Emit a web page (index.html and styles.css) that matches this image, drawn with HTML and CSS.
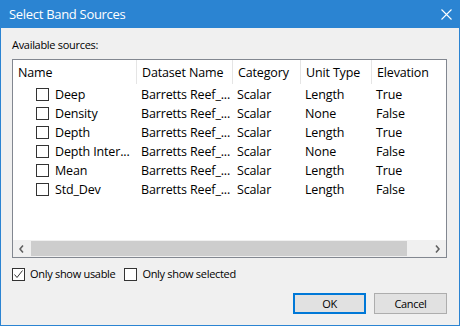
FILE: index.html
```html
<!DOCTYPE html>
<html lang="en">
<head>
    <meta charset="UTF-8">
    <title>Select Band Sources</title>
    <link rel="stylesheet" href="styles.css">
</head>
<body>
    <div class="window">
        <div class="titlebar">
            <span class="title">Select Band Sources</span>
            <svg class="close" width="11" height="11" viewBox="0 0 11 11">
                <path d="M0.5 0.5 L10.5 10.5 M10.5 0.5 L0.5 10.5" stroke="#fff" stroke-width="1.1" fill="none"/>
            </svg>
        </div>

        <div class="content">
            <div class="label">Available sources:</div>

            <div class="listview">
                <div class="list-header">
                    <div class="col col-name">Name</div>
                    <div class="col col-dataset">Dataset Name</div>
                    <div class="col col-cat">Category</div>
                    <div class="col col-unit">Unit Type</div>
                    <div class="col col-elev">Elevation</div>
                </div>
                <div class="list-body">
                    <div class="row">
                        <div class="col col-name"><span class="check"></span>Deep</div>
                        <div class="col col-dataset">Barretts Reef_...</div>
                        <div class="col col-cat">Scalar</div>
                        <div class="col col-unit">Length</div>
                        <div class="col col-elev">True</div>
                    </div>
                    <div class="row">
                        <div class="col col-name"><span class="check"></span>Density</div>
                        <div class="col col-dataset">Barretts Reef_...</div>
                        <div class="col col-cat">Scalar</div>
                        <div class="col col-unit">None</div>
                        <div class="col col-elev">False</div>
                    </div>
                    <div class="row">
                        <div class="col col-name"><span class="check"></span>Depth</div>
                        <div class="col col-dataset">Barretts Reef_...</div>
                        <div class="col col-cat">Scalar</div>
                        <div class="col col-unit">Length</div>
                        <div class="col col-elev">True</div>
                    </div>
                    <div class="row">
                        <div class="col col-name"><span class="check"></span>Depth Inter...</div>
                        <div class="col col-dataset">Barretts Reef_...</div>
                        <div class="col col-cat">Scalar</div>
                        <div class="col col-unit">None</div>
                        <div class="col col-elev">False</div>
                    </div>
                    <div class="row">
                        <div class="col col-name"><span class="check"></span>Mean</div>
                        <div class="col col-dataset">Barretts Reef_...</div>
                        <div class="col col-cat">Scalar</div>
                        <div class="col col-unit">Length</div>
                        <div class="col col-elev">True</div>
                    </div>
                    <div class="row">
                        <div class="col col-name"><span class="check"></span>Std_Dev</div>
                        <div class="col col-dataset">Barretts Reef_...</div>
                        <div class="col col-cat">Scalar</div>
                        <div class="col col-unit">Length</div>
                        <div class="col col-elev">False</div>
                    </div>
                </div>
                <div class="hscroll">
                    <svg class="arrow" width="5" height="8" viewBox="0 0 5 8">
                        <path d="M4 0.5 L1 4 L4 7.5" stroke="#606060" stroke-width="1.6" fill="none"/>
                    </svg>
                    <div class="thumb"></div>
                    <svg class="arrow" width="5" height="8" viewBox="0 0 5 8">
                        <path d="M1 0.5 L4 4 L1 7.5" stroke="#606060" stroke-width="1.6" fill="none"/>
                    </svg>
                </div>
            </div>

            <div class="options">
                <label class="option">
                    <span class="check checked">
                        <svg width="11" height="11" viewBox="0 0 11 11">
                            <path d="M1.5 5.5 L4 8.5 L9.5 1.5" stroke="#333" stroke-width="1" fill="none"/>
                        </svg>
                    </span>
                    Only show usable
                </label>
                <label class="option">
                    <span class="check"></span>
                    Only show selected
                </label>
            </div>

            <div class="buttons">
                <button class="btn btn-default">OK</button>
                <button class="btn">Cancel</button>
            </div>
        </div>
    </div>
</body>
</html>
```

FILE: styles.css
```css
body {
    margin: 0;
    padding: 0;
    font-family: "Open Sans", "Noto Sans", sans-serif;
    font-size: 11px;
    letter-spacing: -0.3px;
    color: #000;
    background-color: #f0f0f0;
}
.window {
    width: 460px;
    height: 326px;
    box-sizing: border-box;
    border: 1px solid #2b84d2;
    border-top: none;
    display: flex;
    flex-direction: column;
    background-color: #f0f0f0;
}
.titlebar {
    height: 28px;
    margin: 0 -1px;
    padding: 0 9px;
    background-color: #2b84d2;
    color: #fff;
    display: flex;
    justify-content: space-between;
    align-items: center;
}
.title {
    font-size: 13px;
    padding-bottom: 1px;
}
.close {
    margin-right: -1px;
}
.content {
    flex-grow: 1;
    padding: 9px 12px 0 11px;
    display: flex;
    flex-direction: column;
}
.label {
    line-height: 16px;
    margin-bottom: 6px;
}
.listview {
    height: 199px;
    box-sizing: border-box;
    border: 1px solid #828790;
    background-color: #fff;
    display: flex;
    flex-direction: column;
    font-size: 12.5px;
    letter-spacing: -0.15px;
}
.list-header, .row {
    display: flex;
}
.list-header {
    height: 24px;
    align-items: stretch;
}
.list-header .col {
    display: flex;
    align-items: center;
    border-right: 1px solid #e5e5e5;
    padding-left: 5px;
}
.list-header .col-elev {
    border-right: none;
}
.col {
    box-sizing: border-box;
    white-space: nowrap;
    overflow: hidden;
}
.col-name { width: 124px; }
.col-dataset { width: 96px; }
.col-cat { width: 68px; }
.col-unit { width: 71px; }
.col-elev { width: 74px; }
.list-body {
    flex-grow: 1;
    padding-top: 1px;
}
.row {
    height: 19px;
    align-items: center;
}
.row .col {
    padding-left: 4px;
}
.row .col-name {
    padding-left: 23px;
    display: flex;
    align-items: center;
}
.check {
    width: 13px;
    height: 13px;
    box-sizing: border-box;
    border: 1px solid #333;
    background-color: #fff;
    margin-right: 6px;
    display: inline-flex;
    align-items: center;
    justify-content: center;
    flex-shrink: 0;
}
.hscroll {
    height: 17px;
    background-color: #f0f0f0;
    display: flex;
    align-items: center;
}
.hscroll .arrow {
    width: 5px;
    margin: 0 6px;
}
.thumb {
    width: 379px;
    height: 15px;
    background-color: #cdcdcd;
    margin-right: 22px;
    margin-left: 1px;
}
.options {
    display: flex;
    gap: 9px;
    margin-top: 8px;
    line-height: 16px;
}
.option {
    display: flex;
    align-items: center;
}
.option .check {
    margin-right: 5px;
}
.buttons {
    display: flex;
    justify-content: flex-end;
    gap: 8px;
    margin-top: 11px;
}
.btn {
    width: 73px;
    height: 21px;
    box-sizing: border-box;
    border: 1px solid #adadad;
    background-color: #e1e1e1;
    font-family: inherit;
    font-size: 11px;
    letter-spacing: -0.3px;
    padding: 0;
    color: #000;
}
.btn-default {
    border: 2px solid #0078d7;
}
```
